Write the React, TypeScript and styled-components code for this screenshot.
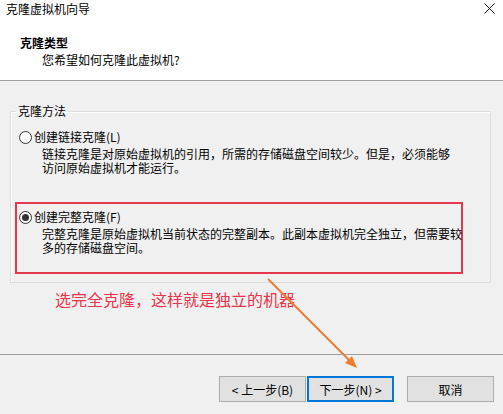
import styled, { createGlobalStyle } from 'styled-components'

const GlobalStyle = createGlobalStyle`
  html, body {
    margin: 0;
    padding: 0;
    background: #f0f0f0;
  }
  body {
    font-family: 'Noto Sans CJK SC', 'Noto Sans', sans-serif;
    font-size: 12px;
    color: #000;
  }
`

const Window = styled.div`
  position: relative;
  width: 503px;
  height: 414px;
  overflow: hidden;
  background: #f0f0f0;
`
const Header = styled.header`
  height: 81px;
  background: #fff;
  border-bottom: 1px solid #a0a0a0;
  box-sizing: border-box;
`
const TitleRow = styled.div`
  display: flex;
  align-items: center;
  justify-content: space-between;
  height: 17px;
  line-height: 17px;
  padding: 0 8px 0 6px;
`
const Heading = styled.h1`
  margin: 17px 0 0 0;
  padding-left: 20px;
  font-size: 12px;
  font-weight: 700;
  line-height: 17px;
`
const SubHeading = styled.p`
  margin: 0;
  padding-left: 42px;
  line-height: 17px;
`
const Group = styled.fieldset`
  margin: 22px 12px 0 10px;
  padding: 3px 0 8px 4px;
  border: 1px solid #dcdcdc;
  box-shadow: inset 1px 1px 0 #fff;
  min-width: 0;
`
const Legend = styled.legend`
  margin-left: 1px;
  padding: 0 2px;
  line-height: 16px;
`
const Option = styled.div<{ $marked?: boolean }>`
  width: 448px;
  box-sizing: border-box;
  height: 72px;
  padding: 5px 0 0 2px;
  border: 2px solid ${p => (p.$marked ? '#e3394f' : 'transparent')};
  & + & {
    margin-top: 8px;
  }
`
const OptionLabel = styled.label`
  display: flex;
  align-items: center;
  gap: 2px;
  line-height: 16px;
`
const Radio = styled.span<{ $checked?: boolean }>`
  width: 13px;
  height: 13px;
  box-sizing: border-box;
  border-radius: 50%;
  border: 1px solid #333;
  background: #fff;
  display: flex;
  align-items: center;
  justify-content: center;
  &::after {
    content: '';
    width: 7px;
    height: 7px;
    border-radius: 50%;
    background: ${p => (p.$checked ? '#333' : 'transparent')};
  }
`
const Description = styled.div`
  margin-top: 2px;
  padding-left: 23px;
  white-space: nowrap;
`
const DescLine = styled.div`
  height: 14px;
  line-height: 14px;
`
const Note = styled.p`
  margin: 6px 0 0 55px;
  font-size: 16px;
  line-height: 20px;
  color: #e8354c;
`
const Footer = styled.footer`
  margin-top: 45px;
  border-top: 1px solid #a0a0a0;
  display: flex;
  justify-content: flex-end;
  padding: 21px 9px 0 0;
`
const Button = styled.button<{ $primary?: boolean; $spaced?: boolean }>`
  width: 87px;
  height: 26px;
  box-sizing: border-box;
  margin-left: ${p => (p.$spaced ? '13px' : '1px')};
  background: #e1e1e1;
  border: ${p => (p.$primary ? '2px solid #0078d7' : '1px solid #adadad')};
  font-family: inherit;
  font-size: 12px;
  color: #000;
  padding: 0;
`
const Overlay = styled.svg`
  position: absolute;
  top: 0;
  left: 0;
  pointer-events: none;
`

const options = [
  {
    label: '创建链接克隆(L)',
    lines: ['链接克隆是对原始虚拟机的引用，所需的存储磁盘空间较少。但是，必须能够', '访问原始虚拟机才能运行。'],
    checked: false,
  },
  {
    label: '创建完整克隆(F)',
    lines: ['完整克隆是原始虚拟机当前状态的完整副本。此副本虚拟机完全独立，但需要较', '多的存储磁盘空间。'],
    checked: true,
  },
]

export default function App() {
  return (
    <Window>
      <GlobalStyle />
      <Header>
        <TitleRow>
          <span>克隆虚拟机向导</span>
          <svg width="11" height="11" viewBox="0 0 11 11">
            <path d="M0.5 0.5 L10.5 10.5 M10.5 0.5 L0.5 10.5" stroke="#111" strokeWidth="1" />
          </svg>
        </TitleRow>
        <Heading>克隆类型</Heading>
        <SubHeading>您希望如何克隆此虚拟机?</SubHeading>
      </Header>

      <Group>
        <Legend>克隆方法</Legend>
        {options.map(o => (
          <Option key={o.label} $marked={o.checked}>
            <OptionLabel>
              <Radio $checked={o.checked} />
              {o.label}
            </OptionLabel>
            <Description>
              {o.lines.map(l => (
                <DescLine key={l}>{l}</DescLine>
              ))}
            </Description>
          </Option>
        ))}
      </Group>

      <Note>选完全克隆，这样就是独立的机器</Note>

      <Footer>
        <Button>&lt; 上一步(B)</Button>
        <Button $primary>下一步(N) &gt;</Button>
        <Button $spaced>取消</Button>
      </Footer>

      <Overlay width="503" height="414" viewBox="0 0 503 414">
        <line x1="268" y1="279" x2="350" y2="361" stroke="#ed7d31" strokeWidth="2" />
        <polygon points="357,368 345,363 352,356" fill="#ed7d31" />
      </Overlay>
    </Window>
  )
}
